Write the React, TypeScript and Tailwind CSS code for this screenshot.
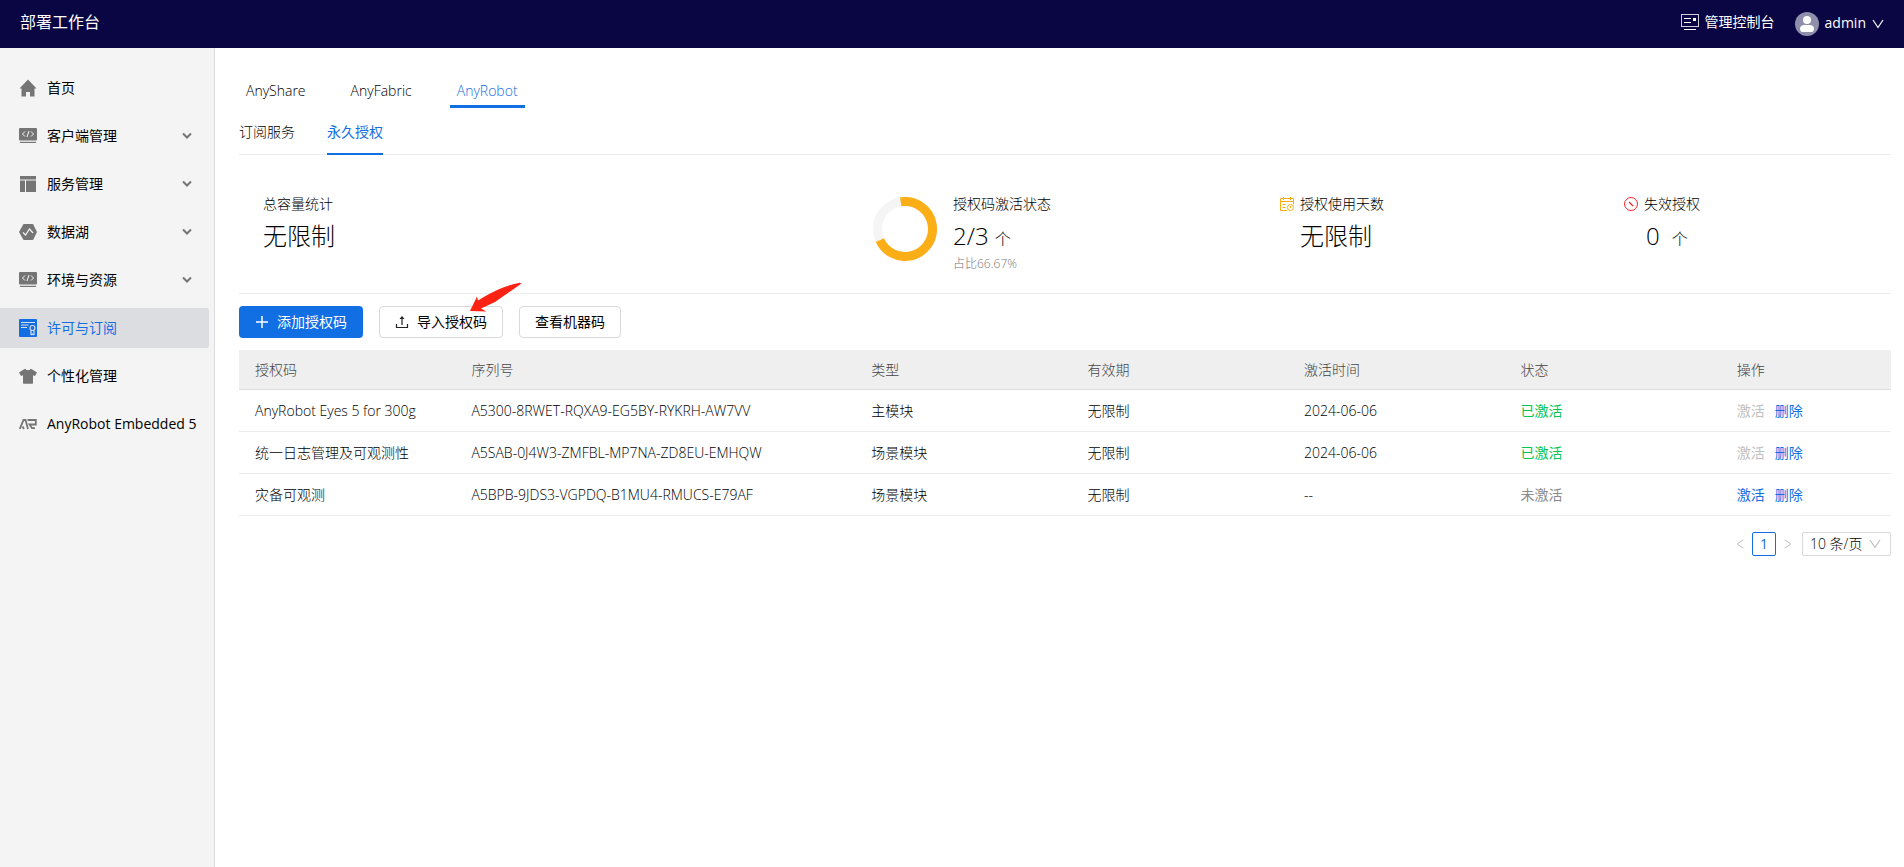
import { useState } from 'react';
import type { ReactNode } from 'react';
import clsx from 'clsx';

function HomeIcon() {
  return (
    <svg width="18" height="18" viewBox="0 0 18 18" fill="currentColor">
      <path d="M9 0.500 0.500 9.500H2.500V17.500H7V13H11V17.500H15.500V9.500H17.500z" />
    </svg>
  );
}

function CodeIcon() {
  return (
    <svg width="18" height="18" viewBox="0 0 18 18">
      <rect x="0" y="1" width="18" height="12.500" rx="1" fill="currentColor" />
      <rect x="1" y="14.800" width="16" height="1.200" fill="currentColor" />
      <path d="M6 4.500 3.500 7 6 9.500M12 4.500l2.500 2.500L12 9.500M10 4 8 10" fill="none" stroke="#f4f4f4" strokeWidth="1" />
    </svg>
  );
}

function LayoutIcon() {
  return (
    <svg width="18" height="18" viewBox="0 0 18 18" fill="currentColor">
      <path d="M1 1h16v3.500H1zM1 5.500h5V17H1zM7 5.500h10V17H7z" />
    </svg>
  );
}

function LakeIcon() {
  return (
    <svg width="18" height="18" viewBox="0 0 18 18">
      <path d="M5 1h8.500a1 1 0 0 1 .8.500L18 9l-3.700 7.500a1 1 0 0 1-.8.500H5a1 1 0 0 1-.8-.500L0 9l4.200-7.500A1 1 0 0 1 5 1z" fill="currentColor" />
      <path d="m4 9.500 2.500 2.500 4-6 3.500 4" fill="none" stroke="#f4f4f4" strokeWidth="1.200" />
    </svg>
  );
}

function LicenseIcon() {
  return (
    <svg width="18" height="18" viewBox="0 0 18 18">
      <rect width="18" height="18" rx="1" fill="currentColor" />
      <g fill="none" stroke="#dcdde1">
        <path d="M2 3.500h14M2 6h7.500M2 8.500h6" strokeWidth="1" />
        <circle cx="13.500" cy="9" r="2.500" strokeWidth="1.200" />
        <path d="M12 11.500V16M15 11.500V16M12 16l1.500-1 1.500 1" strokeWidth="1.200" />
      </g>
    </svg>
  );
}

function ShirtIcon() {
  return (
    <svg width="18" height="18" viewBox="0 0 18 18" fill="currentColor">
      <path d="M5.500 2h1.200c.5 1.600 4.100 1.600 4.600 0h1.200L18 5.500 16 9l-2-.8V16a.8.8 0 0 1-.8.800H4.800A.8.800 0 0 1 4 16V8.200L2 9 0 5.500z" />
    </svg>
  );
}

function RobotIcon() {
  return (
    <svg width="18" height="18" viewBox="0 0 18 18" fill="none" stroke="currentColor" strokeWidth="1.800">
      <path d="M0.800 14 4.500 5h2L9 14M3.500 11.500 5 14" />
      <path d="M8.500 5H16.800V9.500H10.500L13 13.200H16" />
    </svg>
  );
}

function ChevronIcon() {
  return (
    <svg width="10" height="8" viewBox="0 0 10 8" fill="none" stroke="#757575" strokeWidth="2">
      <path d="M1 1.500l4 4 4-4" />
    </svg>
  );
}

function ThinChevron({ className }: { className?: string }) {
  return (
    <svg className={className} width="12" height="12" viewBox="0 0 12 12" fill="none" stroke="currentColor" strokeWidth="1.200">
      <path d="M1 2l5 7.500L11 2" />
    </svg>
  );
}

function ConsoleIcon() {
  return (
    <svg width="18" height="18" viewBox="0 0 18 18" fill="none" stroke="#fff">
      <rect x="0.500" y="1.500" width="17" height="12" strokeOpacity="0.8" />
      <path d="M3 5.500h7M3 9.500h7M3 16.500h12" />
      <rect x="12" y="5" width="3" height="3" fill="#fff" stroke="none" />
    </svg>
  );
}

function AvatarIcon() {
  return (
    <svg width="24" height="24" viewBox="0 0 24 24">
      <circle cx="12" cy="12" r="12" fill="#8f8fab" />
      <circle cx="12" cy="8" r="4" fill="#fff" />
      <path d="M5 16.500c0-2 2-3.500 4-3.500h6c2 0 4 1.500 4 3.500S18 20 16.500 20h-9C6 20 5 18.500 5 16.500z" fill="#fff" />
    </svg>
  );
}

function UploadIcon() {
  return (
    <svg width="14" height="14" viewBox="0 0 14 14" fill="none" stroke="#222" strokeWidth="1.200">
      <path d="M1.500 9v3.500h11V9M7 10V2.500" />
      <path d="M7 1 4.500 4h5z" fill="#222" stroke="none" />
    </svg>
  );
}

function CalendarIcon() {
  return (
    <svg width="14" height="14" viewBox="0 0 14 14" fill="none" stroke="#faad14">
      <path d="M7 13.500H.5v-12h13v6M.5 4.500h13M3.500 0v3M10.500 0v3M2.500 7.500h3M2.500 10.500h3" />
      <circle cx="10.500" cy="10.500" r="3" />
      <path d="M10.500 9v2" />
    </svg>
  );
}

function ExpiredIcon() {
  return (
    <svg width="14" height="14" viewBox="0 0 14 14" fill="none" stroke="#f5222d">
      <circle cx="7" cy="7" r="6.500" />
      <path d="m5 5 4 4" strokeWidth="1.200" />
    </svg>
  );
}

function Donut({ ratio }: { ratio: number }) {
  const length = 2 * Math.PI * 27.5;
  return (
    <svg width="64" height="64" viewBox="0 0 64 64" fill="none" strokeWidth="9">
      <circle cx="32" cy="32" r="27.500" stroke="#f5f5f5" />
      <circle
        cx="32"
        cy="32"
        r="27.500"
        stroke="#fcae16"
        strokeDasharray={`${length * ratio + 7} ${length}`}
        transform="rotate(-99 32 32)"
      />
    </svg>
  );
}

const menu: { label: string; icon: ReactNode; expandable?: boolean }[] = [
  { label: '首页', icon: <HomeIcon /> },
  { label: '客户端管理', icon: <CodeIcon />, expandable: true },
  { label: '服务管理', icon: <LayoutIcon />, expandable: true },
  { label: '数据湖', icon: <LakeIcon />, expandable: true },
  { label: '环境与资源', icon: <CodeIcon />, expandable: true },
  { label: '许可与订阅', icon: <LicenseIcon /> },
  { label: '个性化管理', icon: <ShirtIcon /> },
  { label: 'AnyRobot Embedded 5', icon: <RobotIcon /> },
];

const products = ['AnyShare', 'AnyFabric', 'AnyRobot'];
const modes = ['订阅服务', '永久授权'];

const columns = [
  { title: '授权码', width: 'w-[13.1%]' },
  { title: '序列号', width: 'w-[24.2%]' },
  { title: '类型', width: 'w-[13.1%]' },
  { title: '有效期', width: 'w-[13.1%]' },
  { title: '激活时间', width: 'w-[13.1%]' },
  { title: '状态', width: 'w-[13.1%]' },
  { title: '操作', width: 'w-[10.3%]' },
];

const licenses = [
  { name: 'AnyRobot Eyes 5 for 300g', serial: 'A5300-8RWET-RQXA9-EG5BY-RYKRH-AW7VV', type: '主模块', date: '2024-06-06', active: true },
  { name: '统一日志管理及可观测性', serial: 'A5SAB-0J4W3-ZMFBL-MP7NA-ZD8EU-EMHQW', type: '场景模块', date: '2024-06-06', active: true },
  { name: '灾备可观测', serial: 'A5BPB-9JDS3-VGPDQ-B1MU4-RMUCS-E79AF', type: '场景模块', date: '--', active: false },
];

function Header() {
  return (
    <header className="flex h-12 items-center justify-between bg-[#0a0543] pr-5 pl-5 font-normal text-white">
      <h1 className="pb-1 text-base leading-6">部署工作台</h1>
      <div className="flex items-center gap-5">
        <a href="#console" className="flex items-center gap-1.5 pb-1">
          <ConsoleIcon />
          管理控制台
        </a>
        <button className="flex items-center gap-1.5">
          <AvatarIcon />
          <span className="pb-0.5">admin</span>
          <ThinChevron />
        </button>
      </div>
    </header>
  );
}

function Sidebar() {
  const [current, setCurrent] = useState('许可与订阅');
  return (
    <nav className="flex w-[215px] shrink-0 flex-col gap-2 border-r border-[#dcdcdc] bg-[#f4f4f4] pt-5 pr-[5px] font-normal">
      {menu.map((item) => (
        <button
          key={item.label}
          onClick={() => setCurrent(item.label)}
          className={clsx(
            'flex h-10 items-center gap-2.5 rounded-r-xs pr-[17px] pl-[19px] text-left whitespace-nowrap',
            current === item.label ? 'bg-[#dcdde1] text-[#126ee3]' : 'text-black',
          )}
        >
          <span className={current === item.label ? 'text-[#126ee3]' : 'text-[#757575]'}>{item.icon}</span>
          <span className="flex-1">{item.label}</span>
          {item.expandable && <ChevronIcon />}
        </button>
      ))}
    </nav>
  );
}

function Stats() {
  return (
    <section className="grid h-[139px] grid-cols-[634fr_407fr_344fr_267fr] border-b border-[#ececec] pt-[39px]">
      <div className="pl-6">
        <div>总容量统计</div>
        <div className="mt-0.5 text-2xl leading-10">无限制</div>
      </div>
      <div className="flex gap-4">
        <span className="pt-[3px]">
          <Donut ratio={2 / 3} />
        </span>
        <div>
          <div>授权码激活状态</div>
          <div className="mt-0.5 text-2xl leading-10">
            2/3 <span className="text-base">个</span>
          </div>
          <div className="text-xs leading-4 text-[#777]">占比66.67%</div>
        </div>
      </div>
      <div>
        <div className="flex items-center gap-1.5">
          <CalendarIcon />
          授权使用天数
        </div>
        <div className="mt-0.5 pl-5 text-2xl leading-10">无限制</div>
      </div>
      <div>
        <div className="flex items-center gap-1.5">
          <ExpiredIcon />
          失效授权
        </div>
        <div className="mt-0.5 flex items-baseline gap-3 pl-[22px] text-2xl leading-10">
          0 <span className="text-base">个</span>
        </div>
      </div>
    </section>
  );
}

function Toolbar() {
  return (
    <div className="mt-3 flex gap-4 font-normal text-black">
      <button className="flex h-8 items-center gap-2 rounded bg-[#126ee3] px-4 text-white">
        <svg width="14" height="14" viewBox="0 0 14 14" stroke="currentColor" strokeWidth="1.500">
          <path d="M1 7h12M7 1v12" />
        </svg>
        添加授权码
      </button>
      <div className="relative">
        <button className="flex h-8 items-center gap-2 rounded border border-[#d9d9d9] px-[15px]">
          <UploadIcon />
          导入授权码
        </button>
        <svg className="pointer-events-none absolute -top-6 left-[90px]" width="53" height="30" viewBox="0 0 53 30" fill="#fc2314">
          <path d="M1 29 8 14.500 9 18.500C22 10 38 3 51 .8c1 0 1.200.8.500 1.500L26 20 12 26.500l5.500 3z" />
        </svg>
      </div>
      <button className="h-8 rounded border border-[#d9d9d9] px-[15px]">查看机器码</button>
    </div>
  );
}

function LicenseTable() {
  return (
    <table className="mt-3 w-full table-fixed border-collapse text-left">
      <thead>
        <tr className="h-[39px] border-b border-[#dedede] bg-[#efefef] text-[#444]">
          {columns.map((c) => (
            <th key={c.title} className={clsx('px-4 pt-0.5 font-light', c.width)}>
              {c.title}
            </th>
          ))}
        </tr>
      </thead>
      <tbody>
        {licenses.map((row) => (
          <tr key={row.serial} className="h-[42px] border-b border-[#ececec] whitespace-nowrap">
            <td className="px-4 pt-0.5">{row.name}</td>
            <td className="px-4 pt-0.5">{row.serial}</td>
            <td className="px-4 pt-0.5">{row.type}</td>
            <td className="px-4 pt-0.5">无限制</td>
            <td className="px-4 pt-0.5">{row.date}</td>
            <td className={clsx('px-4 pt-0.5 font-normal', row.active ? 'text-[#04c452]' : 'text-[#8c8c8c]')}>
              {row.active ? '已激活' : '未激活'}
            </td>
            <td className="px-4 pt-0.5 font-normal">
              <div className="flex gap-2.5 text-[#126ee3]">
                <button disabled={row.active} className="disabled:text-[#bfbfbf]">
                  激活
                </button>
                <button>删除</button>
              </div>
            </td>
          </tr>
        ))}
      </tbody>
    </table>
  );
}

function Pagination() {
  return (
    <div className="mt-4 flex items-center justify-end text-[#bfbfbf]">
      <button aria-label="上一页" disabled className="flex size-6 items-center justify-center">
        <ThinChevron className="size-2.5 rotate-90" />
      </button>
      <button className="size-6 rounded-xs border border-[#126ee3] font-normal text-[#126ee3]">1</button>
      <button aria-label="下一页" disabled className="flex size-6 items-center justify-center">
        <ThinChevron className="size-2.5 -rotate-90" />
      </button>
      <div className="relative ml-0.5">
        <select
          aria-label="每页条数"
          className="h-6 w-[89px] appearance-none rounded-xs border border-[#d9d9d9] bg-white pl-[7px] text-black"
        >
          <option>10 条/页</option>
          <option>20 条/页</option>
        </select>
        <ThinChevron className="pointer-events-none absolute top-1.5 right-2.5 size-3" />
      </div>
    </div>
  );
}

export default function App() {
  const [product, setProduct] = useState('AnyRobot');
  const [mode, setMode] = useState('永久授权');

  return (
    <div className="flex min-h-screen flex-col bg-white font-['Open_Sans','Noto_Sans_CJK_SC',sans-serif] text-sm leading-5 font-light text-black">
      <Header />
      <div className="flex flex-1">
        <Sidebar />
        <main className="min-w-0 flex-1 pt-[31px] pr-[13px] pl-6">
          <div className="flex gap-[31px]">
            {products.map((p) => (
              <button
                key={p}
                onClick={() => setProduct(p)}
                className={clsx(
                  'h-[29px] border-b-3 px-[7px] pb-0.5',
                  product === p ? 'border-[#126ee3] text-[#126ee3]' : 'border-transparent',
                )}
              >
                {p}
              </button>
            ))}
          </div>
          <div className="mt-3.5 flex gap-8 border-b border-[#ececec]">
            {modes.map((m) => (
              <button
                key={m}
                onClick={() => setMode(m)}
                className={clsx(
                  '-mb-px h-[33px] border-b-2 pb-3',
                  mode === m ? 'border-[#126ee3] font-normal text-[#126ee3]' : 'border-transparent',
                )}
              >
                {m}
              </button>
            ))}
          </div>
          <Stats />
          <Toolbar />
          <LicenseTable />
          <Pagination />
        </main>
      </div>
    </div>
  );
}
